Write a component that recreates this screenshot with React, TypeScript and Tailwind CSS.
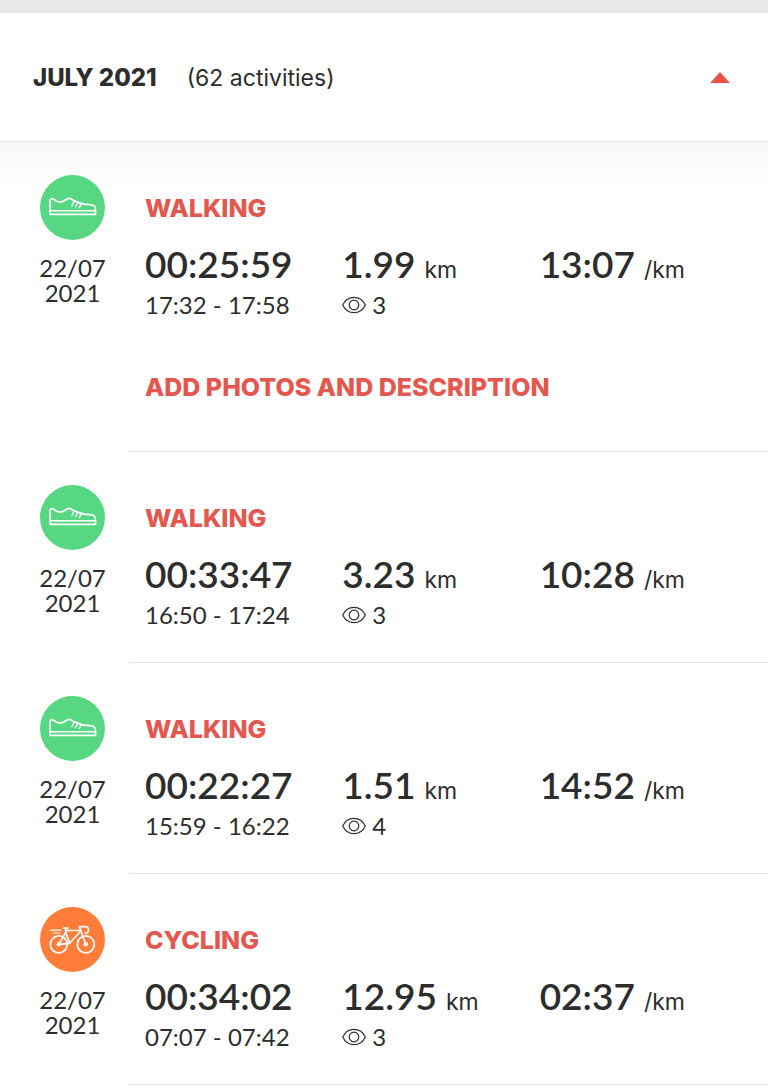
type Activity = {
  kind: "walking" | "cycling";
  title: string;
  duration: string;
  hours: string;
  distance: string;
  pace: string;
  views: number;
  editable?: boolean;
};

const activities: Activity[] = [
  { kind: "walking", title: "WALKING", duration: "00:25:59", hours: "17:32 - 17:58", distance: "1.99", pace: "13:07", views: 3, editable: true },
  { kind: "walking", title: "WALKING", duration: "00:33:47", hours: "16:50 - 17:24", distance: "3.23", pace: "10:28", views: 3 },
  { kind: "walking", title: "WALKING", duration: "00:22:27", hours: "15:59 - 16:22", distance: "1.51", pace: "14:52", views: 4 },
  { kind: "cycling", title: "CYCLING", duration: "00:34:02", hours: "07:07 - 07:42", distance: "12.95", pace: "02:37", views: 3 },
];

function ShoeIcon() {
  return (
    <svg viewBox="0 0 65 65" className="size-full" fill="none" stroke="white" strokeWidth="1.7" strokeLinejoin="round" strokeLinecap="round" aria-hidden="true">
      <path d="M10.2 39.4V25.6c0-2 2-2.6 3.3-1.5 2 1.9 4.2 3 6.7 3 4.3 0 5.8-3.7 8.800-3.700 1.800 0 3.400 1.600 5.500 2.500 3.500 1.500 6.300 2.600 9.500 3.200 3.500.5 7.500.2 9.700 1.500 1.500.9 1.800 2.600 1.800 4.300v4.500z" />
      <path d="M10.2 35.8H55.5" strokeWidth="1.5" />
      <path d="M34.3 25.8L32 30.5M37.8 27.2L35.5 31.7M41.3 28.6L39.2 32.6" strokeWidth="1.4" />
    </svg>
  );
}

function BikeIcon() {
  return (
    <svg viewBox="0 0 65 65" className="size-full" fill="none" stroke="white" strokeWidth="1.7" strokeLinejoin="round" strokeLinecap="round" aria-hidden="true">
      <circle cx="18.8" cy="37.3" r="8.5" />
      <circle cx="45.8" cy="37.3" r="8.5" />
      <circle cx="18.8" cy="37.3" r="2.2" fill="white" stroke="none" />
      <circle cx="45.8" cy="37.3" r="2.2" fill="white" stroke="none" />
      <path d="M18.8 37.3L26.8 23.5H41.3L29.6 36.3L25.8 25.5M18.8 37.3L29.6 36.3" />
      <path d="M25.8 24L25.3 21.3M23.6 21.1H28.2" />
      <path d="M45.8 37.3L39.300 19.7H45.2c2.4 0 3.300 1.800 3.300 3.500s-1 3.200-3.200 3" />
      <path d="M10.5 23.2H21M13 26H20" strokeWidth="1.2" />
    </svg>
  );
}

function EyeIcon() {
  return (
    <svg viewBox="0 0 24 18" className="h-[18px] w-6" fill="none" stroke="currentColor" strokeWidth="1.2" aria-hidden="true">
      <path d="M.7 9C3 4 7 1.3 12 1.3S21 4 23.3 9C21 14 17 16.7 12 16.7S3 14 .7 9z" />
      <circle cx="12" cy="9" r="4.8" />
    </svg>
  );
}

function Measure({ value, unit }: { value: string; unit: string }) {
  return (
    <div className="flex items-baseline gap-[9px] whitespace-nowrap">
      <span className="font-['Lato',sans-serif] text-[37px] leading-[48px] font-semibold">{value}</span>
      <span className="text-[23px]">{unit}</span>
    </div>
  );
}

function ActivityRow({ activity }: { activity: Activity }) {
  return (
    <li className="flex">
      <div className="flex w-[129px] shrink-0 flex-col items-center pt-[33px] pr-4 pl-8">
        <span className={activity.kind === "walking" ? "size-[65px] rounded-full bg-[#57d782]" : "size-[65px] rounded-full bg-[#ff7d39]"}>
          {activity.kind === "walking" ? <ShoeIcon /> : <BikeIcon />}
        </span>
        <time dateTime="2021-07-22" className="mt-[15px] text-center font-['Lato',sans-serif] text-2xl leading-[25px]">
          22/07
          <br />
          2021
        </time>
      </div>
      <div className={activity.editable ? "flex-1 border-b border-[#e4e4e4] pt-[50px] pr-[31px] pb-12 pl-4" : "flex-1 border-b border-[#e4e4e4] pt-[50px] pr-[31px] pb-[30px] pl-4"}>
        <h3 className="text-[25px] leading-8 font-extrabold text-[#e4574e]">
          <a href="#activity">{activity.title}</a>
        </h3>
        <div className="mt-4 grid grid-cols-3 items-baseline">
          <div className="font-['Lato',sans-serif] text-[37px] leading-[48px] font-semibold whitespace-nowrap">{activity.duration}</div>
          <Measure value={activity.distance} unit="km" />
          <Measure value={activity.pace} unit="/km" />
          <div className="font-['Lato',sans-serif] text-2xl leading-[34px] whitespace-nowrap">{activity.hours}</div>
          <div className="flex items-center gap-1.5 font-['Lato',sans-serif] text-2xl leading-[34px]">
            <EyeIcon />
            {activity.views}
          </div>
        </div>
        {activity.editable && (
          <button type="button" className="mt-[49px] block text-[25px] leading-8 font-extrabold whitespace-nowrap text-[#e4574e]">
            ADD PHOTOS AND DESCRIPTION
          </button>
        )}
      </div>
    </li>
  );
}

export default function App() {
  return (
    <main className="bg-white font-['Inter',sans-serif] text-[#2d2d2d]">
      <div className="h-[13px] bg-[#e9e9e9]" />
      <header className="flex h-[129px] items-center border-b border-[#e6e6e6] pr-[38px] pl-[33px]">
        <h2 className="pt-0.5 text-2xl leading-8 font-extrabold">JULY 2021</h2>
        <span className="ml-[30px] pt-0.5 text-[23px] leading-8">(62 activities)</span>
        <button type="button" aria-label="Collapse July 2021" className="ml-auto">
          <svg viewBox="0 0 20 11" className="h-[11px] w-5" aria-hidden="true">
            <path d="M10 0L20 11H0z" fill="#ea5248" />
          </svg>
        </button>
      </header>
      <ul className="bg-linear-to-b from-[#f7f7f7] to-white to-[44px]">
        {activities.map((activity) => (
          <ActivityRow key={activity.duration} activity={activity} />
        ))}
      </ul>
    </main>
  );
}
